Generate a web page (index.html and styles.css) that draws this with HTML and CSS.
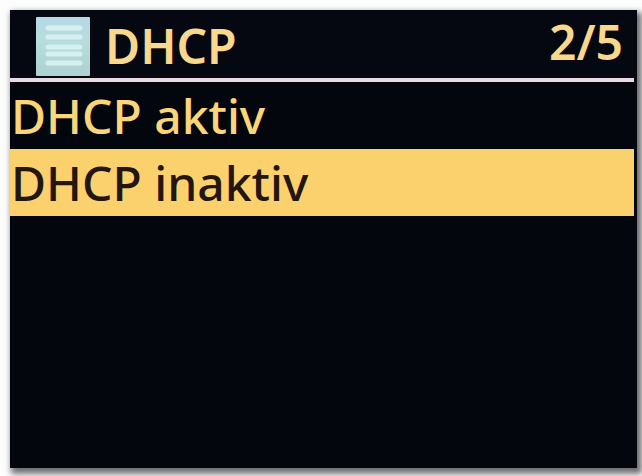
FILE: index.html
```
<!DOCTYPE html>
<html lang="de">
<head>
    <meta charset="UTF-8">
    <meta name="viewport" content="width=device-width, initial-scale=1.0">
    <title>DHCP</title>
    <link rel="stylesheet" href="styles.css">
</head>
<body>
    <main class="screen">
        <header class="header">
            <svg class="icon" viewBox="0 0 54 59" aria-hidden="true">
                <defs>
                    <linearGradient id="paper" x1="0" y1="0" x2="0" y2="1">
                        <stop offset="0" stop-color="#b4d9e8"/>
                        <stop offset="0.4" stop-color="#b9dcdc"/>
                        <stop offset="1" stop-color="#add2d0"/>
                    </linearGradient>
                </defs>
                <rect width="54" height="59" rx="1" fill="url(#paper)"/>
                <g stroke="#d6f0ef" stroke-width="5" stroke-linecap="round">
                    <path d="M12 11H44M12 20H44M12 30H44M12 37H44M12 46H44"/>
                </g>
            </svg>
            <h1 class="title">DHCP</h1>
            <span class="page">2/5</span>
        </header>
        <ul class="menu">
            <li><button type="button" class="item">DHCP aktiv</button></li>
            <li><button type="button" class="item selected">DHCP inaktiv</button></li>
        </ul>
    </main>
</body>
</html>
```
FILE: styles.css
```
* {
    box-sizing: border-box;
}
body {
    margin: 0;
    padding: 10px 5px 8px 10px;
    min-height: 100vh;
    display: flex;
    background-color: #fdfdfd;
    font-family: "Noto Sans", "Open Sans", sans-serif;
    font-size: 48px;
    line-height: 67px;
}
.screen {
    flex: 1;
    background-color: #03060d;
    color: #fad679;
    box-shadow: 3px 4px 6px 2px #707074;
}
.header {
    display: flex;
    align-items: flex-end;
    height: 72px;
    margin-right: 3px;
    padding: 0 11px 2px 26px;
    background-color: #050811;
    color: #f9d88c;
    border-bottom: 4px solid #e9d9e0;
}
.icon {
    width: 54px;
    height: 59px;
}
.title {
    margin: 0 auto 0 15px;
    font-size: 48px;
    font-weight: 600;
    line-height: 60px;
}
.page {
    align-self: flex-start;
    font-weight: 600;
    line-height: 64px;
}
.menu {
    margin: 0;
    padding: 0 3px 0 0;
    list-style: none;
}
.item {
    display: block;
    width: 100%;
    padding: 0 1px;
    border: none;
    background: none;
    color: #fad679;
    font: inherit;
    font-weight: 500;
    text-align: left;
    cursor: pointer;
}
.selected {
    background-color: #fad16c;
    color: #241510;
}
```
